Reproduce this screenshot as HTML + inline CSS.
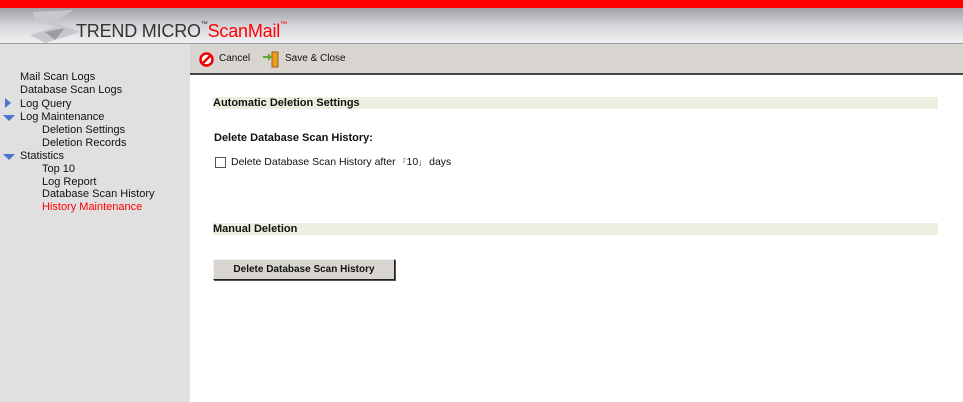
<!DOCTYPE html>
<html><head><style>
body{margin:0;width:963px;height:402px;overflow:hidden;font-family:"Liberation Sans","Noto Sans CJK JP",sans-serif;font-size:11px;color:#111;background:#fff;position:relative}
.red{position:absolute;left:0;top:0;width:963px;height:8px;background:#f00}
.hdr{position:absolute;left:0;top:8px;width:963px;height:35px;background:linear-gradient(#9ea1a6,#d4d5d8 50%,#f2f2f4);border-bottom:1px solid #9a9a9a}
.logo{position:absolute;left:76px;top:13px;font-size:18px;color:#333;letter-spacing:-0.2px}
.logo span{color:#f00}
.logo sup{font-size:7px;vertical-align:top}
.side{position:absolute;left:0;top:44px;width:190px;height:358px;background:#e0e0e0}
.tb{position:absolute;left:190px;top:44px;width:773px;height:29px;background:#d8d5d0;border-bottom:2px solid #444}
.side div{position:absolute;white-space:nowrap}
.h{position:absolute;left:213px;width:725px;height:12px;background:#eeeee0;font-weight:bold;font-size:11px;line-height:12px}
.tri-r{position:absolute;width:0;height:0;border-top:5px solid transparent;border-bottom:5px solid transparent;border-left:6px solid #4a74d0}
.tri-d{position:absolute;width:0;height:0;border-left:6px solid transparent;border-right:6px solid transparent;border-top:6px solid #4a74d0}
</style></head><body>
<div class="red"></div>
<div class="hdr">
<svg style="position:absolute;left:25px;top:2px" width="60" height="33"><polygon points="8,2 48,0 30,12 55,22 20,33 5,25 30,17 10,10" fill="#c8c8cc"/><polygon points="20,22 40,18 30,30" fill="#9a9ca0"/></svg>
<div class="logo">TREND MICRO<sup>™</sup><span>ScanMail<sup>™</sup></span></div>
</div>
<div class="side">
<div style="left:20px;top:27px">Mail Scan Logs</div>
<div style="left:20px;top:40px">Database Scan Logs</div>
<div class="tri-r" style="left:5px;top:54px"></div>
<div style="left:20px;top:54px">Log Query</div>
<div class="tri-d" style="left:3px;top:71px"></div>
<div style="left:20px;top:67px">Log Maintenance</div>
<div style="left:42px;top:80px">Deletion Settings</div>
<div style="left:42px;top:93px">Deletion Records</div>
<div class="tri-d" style="left:3px;top:110px"></div>
<div style="left:20px;top:106px">Statistics</div>
<div style="left:42px;top:119px">Top 10</div>
<div style="left:42px;top:132px">Log Report</div>
<div style="left:42px;top:144px">Database Scan History</div>
<div style="left:42px;top:157px;color:#f00">History Maintenance</div>
</div>
<div class="tb">
<svg style="position:absolute;left:9px;top:8px" width="15" height="15"><circle cx="7.5" cy="7.5" r="6" fill="#fff" stroke="#e00" stroke-width="2.5"/><line x1="3.5" y1="11.5" x2="11.5" y2="3.5" stroke="#e00" stroke-width="2.5"/></svg>
<div style="position:absolute;left:29px;top:9px;font-size:10px">Cancel</div>
<svg style="position:absolute;left:72px;top:6px" width="18" height="18"><path d="M1 6h5V3l4 4-4 4V8H1z" fill="#5a3"/><rect x="10" y="2" width="6" height="15" fill="#e8a020" stroke="#a06010"/></svg>
<div style="position:absolute;left:95px;top:9px;font-size:10px">Save &amp; Close</div>
</div>
<div class="h" style="top:97px">Automatic Deletion Settings</div>
<div style="position:absolute;left:214px;top:132px;font-weight:bold;font-size:11px">Delete Database Scan History:</div>
<div style="position:absolute;left:215px;top:157px;width:9px;height:9px;border:1px solid #555;background:#fff"></div>
<div style="position:absolute;left:231px;top:156px;font-size:10.5px">Delete Database Scan History after <span style="font-size:8px;color:#666">「</span>10<span style="font-size:8px;color:#666">」</span> days</div>
<div class="h" style="top:223px">Manual Deletion</div>
<div style="position:absolute;left:213px;top:259px;width:180px;height:19px;background:#d8d5d0;border:1px solid;border-color:#eee #222 #222 #eee;box-shadow:1px 1px 0 #555;font-weight:bold;font-size:10px;text-align:center;line-height:19px">Delete Database Scan History</div>
</body></html>
